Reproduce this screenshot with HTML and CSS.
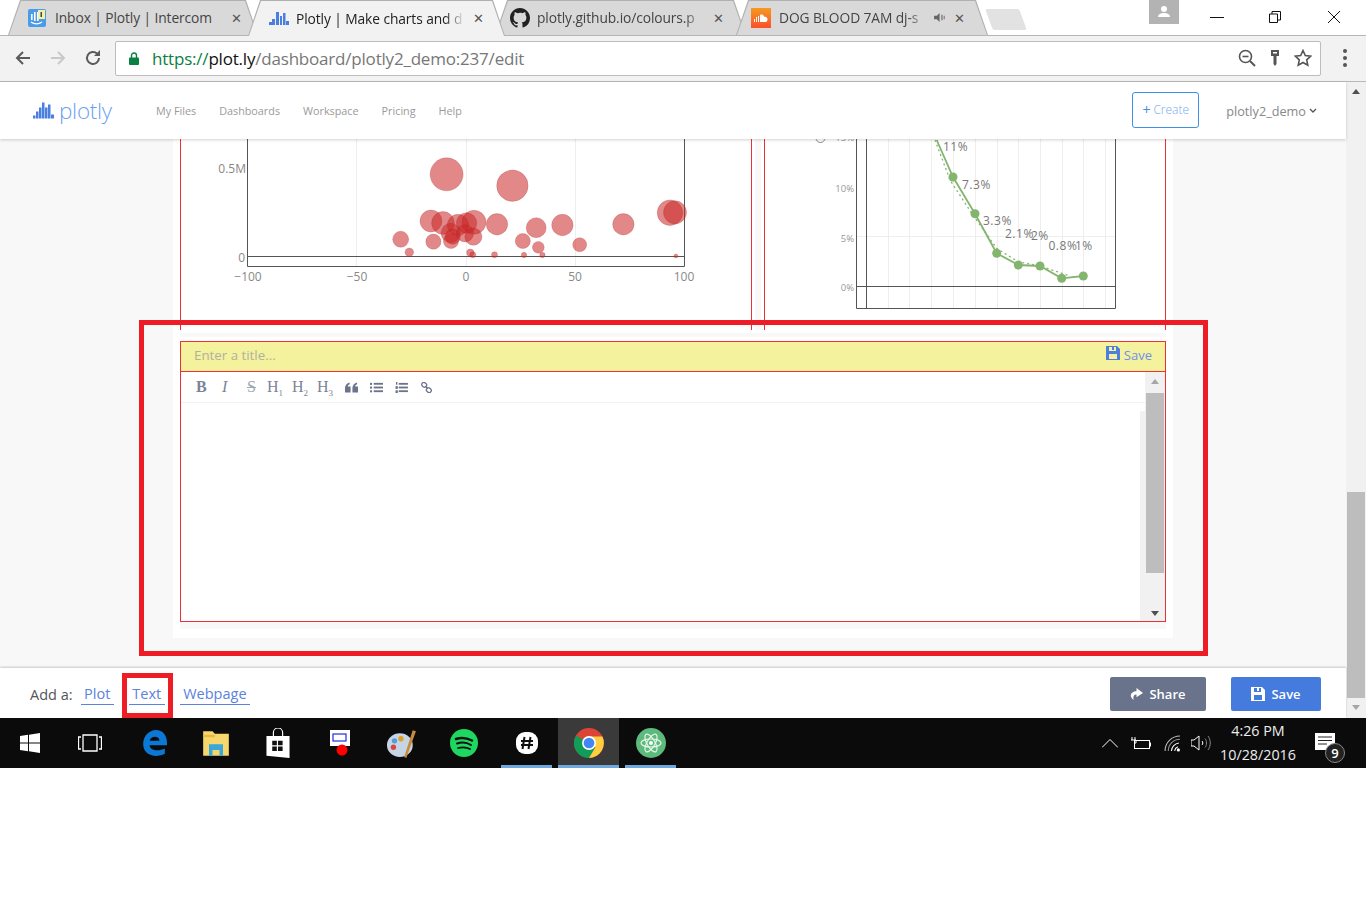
FILE: index.html
```html
<!DOCTYPE html>
<html lang="en">
<head>
<meta charset="utf-8">
<title>Plotly dashboard editor</title>
<link rel="stylesheet" href="styles.css">
</head>
<body>
<div class="window">
  <header class="tabstrip">
    <div class="tab tab-a"><svg class="fav" viewBox="0 0 18 18"><rect width="18" height="18" rx="2" fill="#4a9ce8"/><rect x="3" y="5" width="1.6" height="6" fill="#fff"/><rect x="6" y="3" width="1.6" height="9" fill="#fff"/><rect x="9" y="3" width="1.6" height="9" fill="#fff"/><path d="M3 13c3 2.500 8 2.500 11 0" stroke="#fff" fill="none" stroke-width="1.300"/><rect x="10" y="1" width="7" height="9" fill="#f5f0a8"/><rect x="12.500" y="3" width="1.500" height="5" fill="#444"/></svg><span class="tab-title">Inbox | Plotly | Intercom</span><span class="tab-x">✕</span></div>
    <div class="tab tab-b"><svg class="fav fav-wide" viewBox="0 0 20 18"><g fill="#4a7fe0"><rect x="0" y="13" width="3" height="3"/><rect x="3" y="10" width="3" height="6"/><rect x="7" y="3" width="3" height="13"/><rect x="11" y="7" width="2" height="9"/><rect x="14" y="4" width="2.500" height="12"/><rect x="17" y="12" width="3" height="4"/></g></svg><span class="tab-title tab-fade">Plotly | Make charts and d</span><span class="tab-x">✕</span></div>
    <div class="tab tab-c"><svg class="fav fav-wide" viewBox="0 0 16 16"><path fill="#222" d="M8 0C3.580 0 0 3.580 0 8c0 3.540 2.290 6.530 5.470 7.590.4.070.55-.17.55-.38v-1.340c-2.230.48-2.690-1.070-2.690-1.070-.36-.92-.89-1.170-.89-1.170-.73-.5.050-.49.050-.49.800.060 1.220.820 1.220.820.710 1.220 1.870.870 2.330.660.070-.520.280-.870.510-1.070-1.780-.200-3.640-.890-3.640-3.950 0-.870.310-1.590.820-2.150-.080-.200-.360-1.020.080-2.120 0 0 .670-.210 2.200.820A7.700 7.700 0 0 1 8 3.870c.680 0 1.360.090 2 .270 1.530-1.040 2.200-.820 2.200-.820.440 1.100.160 1.920.080 2.120.510.560.820 1.270.820 2.150 0 3.070-1.870 3.750-3.650 3.950.290.250.540.730.540 1.480v2.190c0 .210.150.460.550.380A8 8 0 0 0 16 8c0-4.420-3.580-8-8-8z"/></svg><span class="tab-title tab-fade">plotly.github.io/colours.p</span><span class="tab-x">✕</span></div>
    <div class="tab tab-d"><svg class="fav fav-wide" viewBox="0 0 20 20"><defs><linearGradient id="sc" x1="0" y1="0" x2="0" y2="1"><stop offset="0" stop-color="#f59a1f"/><stop offset="1" stop-color="#fb4f2c"/></linearGradient></defs><rect width="20" height="20" fill="url(#sc)"/><path fill="#fff" d="M3 14v-3h1v3zm2 0V9h1v5zm2 0V8h1v6zm2 0V7c2-1 4 0 4.500 2 1.500-.5 3 .5 3 2.500S15 14 14 14z"/></svg><span class="tab-title tab-fade">DOG BLOOD 7AM dj-s</span><svg class="tab-sound" viewBox="0 0 14 12"><path fill="#666" d="M0 4h3l3-3v10L3 8H0zM8 3h1.200v6H8zM10.500 4h1v4h-1z"/></svg><span class="tab-x">✕</span></div>
    <div class="newtab"></div>
    <div class="winbtns">
      <div class="profile"><svg viewBox="0 0 14 14" width="14" height="14"><circle cx="7" cy="4" r="3" fill="#fff"/><path d="M1 12c0-3 3-4 6-4s6 1 6 4z" fill="#fff"/></svg></div>
      <svg class="winicon win-min" viewBox="0 0 14 12"><path d="M0 6.500h14" stroke="#111"/></svg>
      <svg class="winicon win-max" viewBox="0 0 12 12"><path d="M.5 3h8v8.500h-8zM3 3V.5h8.500V9H9" stroke="#111" fill="none"/></svg>
      <svg class="winicon win-close" viewBox="0 0 12 12"><path d="M0 0l12 12M12 0L0 12" stroke="#111"/></svg>
    </div>
  </header>
  <div class="toolbar">
    <svg class="navicon" viewBox="0 0 18 18"><path d="M16 9H3M9 3L3 9l6 6" stroke="#5a5a5a" stroke-width="2" fill="none"/></svg>
    <svg class="navicon" viewBox="0 0 18 18"><path d="M2 9h13M9 3l6 6-6 6" stroke="#c9c9c9" stroke-width="2" fill="none"/></svg>
    <svg class="navicon" viewBox="0 0 18 18"><path d="M15 9a6 6 0 1 1-1.800-4.300" stroke="#5a5a5a" stroke-width="2" fill="none"/><path d="M16 1v6h-6z" fill="#5a5a5a"/></svg>
    <div class="omnibox">
      <svg class="lock" viewBox="0 0 10 13"><path d="M2.500 6V3.500a2.500 2.500 0 0 1 5 0V6" stroke="#0b8043" stroke-width="1.400" fill="none"/><rect y="5.500" width="10" height="7.500" rx="1" fill="#0b8043"/></svg>
      <div class="url"><span class="url-https">https://</span><span class="url-host">plot.ly</span><span class="url-path">/dashboard/plotly2_demo:237/edit</span></div>
      <svg class="omni-icon" viewBox="0 0 18 18"><circle cx="7.500" cy="7.500" r="6" stroke="#555" stroke-width="1.600" fill="none"/><path d="M12 12l5 5" stroke="#555" stroke-width="2"/><path d="M4.500 7.500h6" stroke="#555" stroke-width="1.600"/></svg>
      <svg class="omni-icon" viewBox="0 0 18 18"><path d="M5 1h8v6h-2.500v8L9 17l-1.500-2V7H5z" fill="#555"/><rect x="7" y="3" width="4" height="1.500" fill="#fff"/></svg>
      <svg class="omni-icon" viewBox="0 0 18 18"><path d="M9 1.500l2.300 5 5.400.6-4 3.700 1.100 5.400L9 13.500l-4.800 2.700 1.100-5.400-4-3.700 5.400-.6z" stroke="#555" stroke-width="1.600" fill="none"/></svg>
    </div>
    <div class="kebab"><i></i><i></i><i></i></div>
  </div>

  <div class="viewport">
    <div class="page">
      <nav class="sitenav">
        <div class="logo"><svg class="logo-mark" viewBox="0 0 22 18"><g fill="#4a7fe0"><rect x="0" y="14" width="2.500" height="3"/><rect x="3" y="10" width="2.500" height="7"/><rect x="6" y="6" width="2.500" height="11"/><rect x="9" y="1" width="2.500" height="16"/><rect x="12" y="6" width="2.500" height="11"/><rect x="15" y="3" width="2.500" height="14"/><rect x="18" y="13" width="3" height="4"/></g></svg><span class="logo-text">plotly</span></div>
        <a class="navlink">My Files</a>
        <a class="navlink">Dashboards</a>
        <a class="navlink">Workspace</a>
        <a class="navlink">Pricing</a>
        <a class="navlink">Help</a>
        <span class="nav-spacer"></span>
        <a class="create"><b>+</b> Create</a>
        <span class="user">plotly2_demo<svg viewBox="0 0 8 6" width="8" height="6"><path d="M1 1l3 3 3-3" stroke="#555" stroke-width="1.300" fill="none"/></svg></span>
      </nav>
      <main class="canvas">
        <div class="sheet">
          <div class="chart-row">
            <section class="panel panel-left">
              <svg class="chart" viewBox="1 0 570 191" width="570" height="191">
                <g stroke="#eee"><line x1="176.500" y1="0" x2="176.500" y2="127"/><line x1="286.500" y1="0" x2="286.500" y2="127"/><line x1="395.500" y1="0" x2="395.500" y2="127"/></g>
                <path d="M67.500 0v127.500h437V0" fill="none" stroke="#555"/>
                <line x1="67" y1="117.500" x2="504" y2="117.500" stroke="#555"/>
                <g fill="#cb2727" fill-opacity="0.55" stroke="#a01f1f" stroke-opacity="0.2">
                  <circle cx="266.600" cy="35.300" r="16.500"/><circle cx="332.400" cy="46.700" r="15.700"/>
                  <circle cx="251" cy="82" r="11"/><circle cx="263" cy="84" r="11.400"/><circle cx="278" cy="86" r="10.700"/><circle cx="286.600" cy="84" r="10.300"/><circle cx="294" cy="83.300" r="12"/><circle cx="317" cy="85.300" r="10.700"/>
                  <circle cx="270.700" cy="94" r="9.700"/><circle cx="272.800" cy="97.700" r="7.600"/><circle cx="285" cy="94.300" r="8.600"/><circle cx="293.400" cy="97.700" r="8.600"/><circle cx="271" cy="102" r="7.600"/>
                  <circle cx="356.200" cy="88.700" r="10"/><circle cx="382.400" cy="86" r="10.700"/><circle cx="443.400" cy="85.300" r="10.700"/><circle cx="490" cy="73.700" r="12.800"/><circle cx="495" cy="73.300" r="11.500"/>
                  <circle cx="220.700" cy="100.300" r="8"/><circle cx="253.400" cy="102.700" r="7.600"/><circle cx="342.800" cy="102" r="7.600"/><circle cx="358.300" cy="108.300" r="5.900"/><circle cx="399.700" cy="105.700" r="7"/>
                  <circle cx="229.300" cy="113.300" r="4.300"/><circle cx="290.300" cy="113.700" r="3.700"/><circle cx="292.800" cy="115.700" r="3"/><circle cx="314.500" cy="115.700" r="3"/><circle cx="344" cy="116" r="2.700"/><circle cx="362.400" cy="116" r="2.700"/><circle cx="495.900" cy="117" r="2"/>
                </g>
                <g class="tick" text-anchor="end"><text x="66" y="34">0.5M</text><text x="65" y="123">0</text></g>
                <g class="tick" text-anchor="middle"><text x="68" y="142">−100</text><text x="177" y="142">−50</text><text x="286" y="142">0</text><text x="395" y="142">50</text><text x="504" y="142">100</text></g>
              </svg>
            </section>
            <div class="gutter"></div>
            <section class="panel panel-right">
              <svg class="chart" viewBox="0 0 400 191" width="400" height="191">
                <g stroke="#eee"><line x1="123.500" y1="0" x2="123.500" y2="169"/><line x1="144.500" y1="0" x2="144.500" y2="169"/><line x1="166.500" y1="0" x2="166.500" y2="169"/><line x1="188.500" y1="0" x2="188.500" y2="169"/><line x1="210.500" y1="0" x2="210.500" y2="169"/><line x1="232.500" y1="0" x2="232.500" y2="169"/><line x1="253.500" y1="0" x2="253.500" y2="169"/><line x1="275.500" y1="0" x2="275.500" y2="169"/><line x1="297.500" y1="0" x2="297.500" y2="169"/><line x1="318.500" y1="0" x2="318.500" y2="169"/><line x1="340.500" y1="0" x2="340.500" y2="169"/><line x1="92" y1="97.500" x2="351" y2="97.500"/></g>
                <path d="M91.500 0v169.500h259V0" fill="none" stroke="#555"/>
                <line x1="91" y1="147.500" x2="351" y2="147.500" stroke="#555"/>
                <line x1="101.500" y1="0" x2="101.500" y2="169" stroke="#555"/>
                <path d="M170 1L185 41 206.700 74.300 231.700 109.300 253 122.700 275 127 305 137" fill="none" stroke="#84b56f" stroke-width="1.300" stroke-dasharray="2 3"/>
                <path d="M171.700 1L188 38 210 74.700 231.700 114.300 253.300 126 275 127 296.700 139.300 318.300 137" fill="none" stroke="#84b56f" stroke-width="1.800"/>
                <g fill="#84b56f"><circle cx="188" cy="38" r="4.500"/><circle cx="210" cy="74.700" r="4.500"/><circle cx="231.700" cy="114.300" r="4.500"/><circle cx="253.300" cy="126" r="4.500"/><circle cx="275" cy="127" r="4.500"/><circle cx="296.700" cy="139.300" r="4.500"/><circle cx="318.300" cy="137" r="4.500"/></g>
                <g class="pct"><text x="178" y="12">11%</text><text x="197" y="50">7.3%</text><text x="218" y="86">3.3%</text><text x="240" y="99">2.1%</text><text x="266" y="101">2%</text><text x="283.500" y="111">0.8%</text><text x="310" y="111">1%</text></g>
                <g class="tick-sm" text-anchor="end"><text x="89" y="2">15%</text><text x="89" y="53">10%</text><text x="89" y="103">5%</text><text x="89" y="152">0%</text></g>
                <circle cx="55.500" cy="-1" r="4.500" fill="none" stroke="#888"/>
              </svg>
            </section>
          </div>
          <div class="sheet-strip sheet-strip-top"></div>
          <section class="textcard">
            <div class="textcard-title"><span class="placeholder">Enter a title...</span><a class="textcard-save"><svg viewBox="0 0 14 14" width="14" height="14"><path fill="#4d7ee0" d="M0 0h11l3 3v11H0zM3 1v4h7V1H8v3H6V1zM3 8v5h8V8z"/></svg>Save</a></div>
            <div class="editor">
              <div class="editor-main">
                <div class="editor-tools">
                  <b class="tb tb-b">B</b><i class="tb tb-i">I</i><s class="tb tb-s">S</s>
                  <span class="tb tb-h">H<sub>1</sub></span><span class="tb tb-h">H<sub>2</sub></span><span class="tb tb-h">H<sub>3</sub></span>
                  <svg class="tb-ico tb-quote" viewBox="0 0 14 11"><path fill="#6b7489" d="M0 6c0-3 2-5 5-6v2C3.500 2.500 3 3.500 3 4.500h3V11H0zM8 6c0-3 2-5 5-6v2c-1.500.5-2 1.500-2 2.500h3V11H8z"/></svg>
                  <svg class="tb-ico" viewBox="0 0 14 11"><g fill="#6b7489"><rect y="0.500" width="2.200" height="2.200"/><rect y="4.500" width="2.200" height="2.200"/><rect y="8.500" width="2.200" height="2.200"/><rect x="4" y="0.500" width="10" height="2"/><rect x="4" y="4.500" width="10" height="2"/><rect x="4" y="8.500" width="10" height="2"/></g></svg>
                  <svg class="tb-ico" viewBox="0 0 14 12"><g fill="#6b7489"><rect x="4" y="1" width="10" height="2"/><rect x="4" y="5" width="10" height="2"/><rect x="4" y="9" width="10" height="2"/><rect x="1" y="0" width="1.500" height="3"/><rect x="0.500" y="4.500" width="2.500" height="3"/><rect x="0.500" y="9" width="2.500" height="3"/></g></svg>
                  <svg class="tb-ico" viewBox="0 0 13 13"><g fill="none" stroke="#6b7489" stroke-width="1.500"><rect x="0.800" y="0.800" width="6" height="5" rx="2.500" transform="rotate(40 3.800 3.300)"/><rect x="6.200" y="7.200" width="6" height="5" rx="2.500" transform="rotate(40 9.200 9.700)"/><path d="M5 5l3 3"/></g></svg>
                </div>
                <div class="editor-body"><div class="editor-inner-scroll"></div></div>
              </div>
              <div class="vscroll vscroll-inner">
                <span class="arrow-up"></span>
                <span class="vtrack"><span class="vthumb"></span></span>
                <span class="arrow-down dark"></span>
              </div>
            </div>
          </section>
          <div class="sheet-strip sheet-strip-bottom"></div>
        </div>
      </main>
      <footer class="addbar">
        <span class="add-label">Add a:</span>
        <a class="addlink">Plot</a>
        <a class="addlink">Text<span class="callout-small"></span></a>
        <a class="addlink">Webpage</a>
        <span class="nav-spacer"></span>
        <a class="btn btn-share"><svg viewBox="0 0 14 14" width="13" height="13"><path fill="#fff" d="M7 0l7 5.500L7 10V7C4 7 3 9 4 13 1 11 0 8 1.500 6 3 4 5 3.500 7 3.500z"/></svg>Share</a>
        <a class="btn btn-save"><svg viewBox="0 0 14 14" width="14" height="14"><path fill="#fff" d="M0 0h11l3 3v11H0zM3 1v4h7V1H8v3H6V1zM3 8v5h8V8z"/></svg>Save</a>
      </footer>
      <div class="callout-big"></div>
    </div>
    <div class="vscroll vscroll-page">
      <span class="arrow-up dark"></span>
      <span class="vtrack vtrack-page"><span class="vthumb"></span></span>
      <span class="arrow-down"></span>
    </div>
  </div>

  <footer class="taskbar">
    <div class="task-cell task-cell-narrow"><svg class="ico-20" viewBox="0 0 20 20"><path fill="#fff" d="M0 3l8-1.200V9.500H0zM9 1.700L20 0v9.500H9zM0 10.500h8v7.700L0 17zM9 10.500h11V20L9 18.300z"/></svg></div>
    <div class="task-cell task-cell-narrow task-cell-gap"><svg class="ico-24" viewBox="0 0 24 18"><path d="M5 1h14v16H5zM3 3H0.500v12H3M21 3h2.500v12H21" stroke="#fff" stroke-width="1.300" fill="none"/></svg></div>
    <div class="task-cell"><svg class="ico-26" viewBox="0 0 24 24"><path fill="#0a78d4" d="M2 13C2 5 8 0 14 0c6 0 10 5 10 12v2H8c0 5 8 6 14 3v5c-8 4-20 2-20-9zm6-3h9c0-5-8-5-9 0z"/></svg></div>
    <div class="task-cell"><svg class="ico-28" viewBox="0 0 24 24"><path fill="#f5d76e" d="M1 2h8l2 2h12v19H1z"/><path fill="#e8bb3f" d="M1 5h10v2H1z"/><path fill="#3aa7dc" d="M6 13h12v10h-3v-5H9v5H6z"/></svg></div>
    <div class="task-cell"><svg class="ico-30" viewBox="0 0 24 26"><path d="M8 8V4a4 4 0 0 1 8 0v4" stroke="#fff" fill="none"/><path fill="#fff" d="M2 7h20v19L2 24z"/><path fill="#111" d="M7 11h4v4H7zM12 11h4v4h-4zM7 16h4v4H7zM12 16h4v4h-4z"/></svg></div>
    <div class="task-cell"><svg class="ico-26" viewBox="0 0 24 26"><rect x="2" y="0" width="20" height="16" fill="#fff"/><rect x="5" y="4" width="13" height="7" fill="#fff" stroke="#2030e0" stroke-width="1.200"/><circle cx="14" cy="20" r="5.500" fill="#f00"/></svg></div>
    <div class="task-cell"><svg class="ico-30" viewBox="0 0 28 28"><ellipse cx="12" cy="16" rx="12" ry="11" fill="#c5d5e5"/><circle cx="7" cy="12" r="2.500" fill="#4ca0dc"/><circle cx="13" cy="10" r="2.500" fill="#e0a020"/><circle cx="6" cy="18" r="2.500" fill="#d9483a"/><path d="M24 2l3 1-9 25-2-1z" fill="#c98a3a"/></svg></div>
    <div class="task-cell"><svg class="ico-28" viewBox="0 0 28 28"><circle cx="14" cy="14" r="14" fill="#1ed760"/><g stroke="#111" fill="none" stroke-linecap="round"><path d="M6 10c6-2 11-1 16 1.500" stroke-width="2.500"/><path d="M7 14.500c5-1.500 10-1 14 1.500" stroke-width="2"/><path d="M8 19c4-1 9-.7 12 1" stroke-width="1.800"/></g></svg></div>
    <div class="task-slot"><svg class="ico-24" viewBox="0 0 24 24"><rect x="1" y="1" width="22" height="22" rx="9" fill="#fff"/><path d="M9.500 6l-2 12M15.500 6l-2 12M6 10h12M6 14h12" stroke="#111" stroke-width="2"/></svg></div>
    <div class="task-slot active"><svg class="ico-30" viewBox="0 0 28 28"><circle cx="14" cy="14" r="14" fill="#db4437"/><path d="M14 14L1.900 21A14 14 0 0 1 2 7z" fill="#0f9d58"/><path d="M14 28A14 14 0 0 1 1.900 21L9 14h5l6 6z" fill="#0f9d58"/><path d="M14 8h12.500A14 14 0 0 1 14 28l6-10z" fill="#ffcd40"/><circle cx="14" cy="14" r="6.500" fill="#fff"/><circle cx="14" cy="14" r="5" fill="#4285f4"/></svg></div>
    <div class="task-slot"><svg class="ico-30" viewBox="0 0 30 30"><circle cx="15" cy="15" r="15" fill="#5dba7d"/><g fill="none" stroke="#e8f5ea" stroke-width="1.200"><ellipse cx="15" cy="15" rx="10" ry="4"/><ellipse cx="15" cy="15" rx="10" ry="4" transform="rotate(60 15 15)"/><ellipse cx="15" cy="15" rx="10" ry="4" transform="rotate(120 15 15)"/></g><circle cx="15" cy="15" r="2" fill="#fff"/></svg></div>
    <span class="nav-spacer"></span>
    <div class="tray">
      <svg viewBox="0 0 16 9" width="16" height="9"><path d="M0 8.500l8-8 8 8" stroke="#fff" fill="none"/></svg>
      <svg viewBox="0 0 20 13" width="20" height="13"><rect x="3.500" y="3.500" width="15" height="8" fill="none" stroke="#fff"/><rect x="18.500" y="5.500" width="1.500" height="4" fill="#fff"/><path d="M1 0v3M4 0v3M0 3h5v3H3.500v6" stroke="#fff" fill="none"/></svg>
      <svg viewBox="0 0 16 16" width="17" height="17"><g fill="none" stroke="#bbb"><path d="M1 15A14 14 0 0 1 15 1"/><path d="M4 15A11 11 0 0 1 15 4" stroke="#999"/><path d="M7 15a8 8 0 0 1 7-7.500" stroke="#fff"/><path d="M10 15a5 5 0 0 1 3-4" stroke="#fff"/></g><circle cx="13.500" cy="14" r="1.500" fill="#fff"/></svg>
      <svg class="tray-vol" viewBox="0 0 20 16" width="20" height="16"><path d="M0 5h3l5-4v14l-5-4H0z" fill="none" stroke="#fff"/><path d="M11 6c1 1 1 3 0 4" stroke="#fff" fill="none"/><path d="M14 3.500c2 2 2 7 0 9M17 1c3 4 3 10 0 14" stroke="#888" fill="none"/></svg>
    </div>
    <div class="clock"><span>4:26 PM</span><span>10/28/2016</span></div>
    <div class="action-center"><svg viewBox="0 0 20 17" width="20" height="17"><path fill="#fff" d="M0 0h20v17H0z"/><path d="M3 4h14M3 7.500h14M3 11h9" stroke="#222"/></svg><span class="action-badge">9</span></div>
  </footer>
</div>
</body>
</html>
```
FILE: styles.css
```css
* { box-sizing: border-box; }
html, body { margin: 0; padding: 0; background: #fff; overflow: hidden; }
body { font-family: "Open Sans", "Liberation Sans", sans-serif; color: #555; height: 906px; }
a { cursor: pointer; }
.window { width: 1366px; height: 768px; display: flex; flex-direction: column; }

/* tabs */
.tabstrip { height: 36px; display: flex; align-items: flex-end; padding-left: 8px; background: #fff; border-bottom: 1px solid #b5b5b5; position: relative; flex: none; }
.tab { margin-right: -10px; height: 35px; background: #b0b0b0; clip-path: polygon(0 100%, 12px 0, calc(100% - 12px) 0, 100% 100%); display: flex; align-items: center; font-size: 13.800px; color: #444; white-space: nowrap; flex: none; position: relative; isolation: isolate; }
.tab::before { content: ""; position: absolute; inset: 1px 1px 0 1px; background: #d9d9d9; clip-path: polygon(0 100%, 12px 0, calc(100% - 12px) 0, 100% 100%); z-index: -1; }
.tab-a { width: 250px; padding: 0 15px 0 20px; }
.tab-b { width: 257px; padding: 0 20px 0 21px; color: #222; z-index: 1; height: 36px; margin-bottom: -1px; }
.tab-b::before { background: #f2f2f2; }
.tab-c { width: 251px; padding: 0 21px 0 15px; }
.tab-d { width: 252px; padding: 0 22px 0 15px; margin-right: 0; }
.fav { width: 18px; height: 18px; flex: none; margin-right: 9px; }
.fav-wide { width: 20px; height: 20px; margin-right: 7px; }
.tab-d .fav-wide { margin-right: 8px; }
.tab-title { flex: 1; overflow: hidden; letter-spacing: -0.100px; min-width: 0; }
.tab-fade { -webkit-mask-image: linear-gradient(to right, #000 calc(100% - 26px), transparent calc(100% - 6px)); mask-image: linear-gradient(to right, #000 calc(100% - 26px), transparent calc(100% - 6px)); }
.tab-x { font-size: 13px; color: #555; width: 14px; flex: none; text-align: center; }
.tab-sound { width: 13px; height: 11px; flex: none; margin: 0 5px 0 0; }
.newtab { width: 34px; height: 21px; margin: 0 0 5px 1px; background: #e2e2e2; transform: skewX(20deg); border-radius: 2px; flex: none; }
.winbtns { margin-left: auto; align-self: flex-start; display: flex; align-items: flex-start; }
.profile { width: 30px; height: 24px; background: #b3b3b3; display: flex; align-items: center; justify-content: center; margin-right: 31px; }
.winicon { height: 12px; margin-top: 11px; flex: none; }
.win-min { width: 14px; }
.win-max { width: 12px; margin-left: 45px; }
.win-close { width: 12px; margin-left: 47px; margin-right: 26px; }

/* toolbar */
.toolbar { height: 46px; flex: none; background: #f2f2f2; border-bottom: 1px solid #b8b8b8; display: flex; align-items: center; padding: 0 9px 1px 14px; }
.navicon { width: 18px; height: 18px; margin-right: 17px; flex: none; }
.navicon:nth-child(3) { margin-right: 13px; }
.omnibox { flex: 1; height: 35px; background: #fff; border: 1px solid #bdbdbd; border-radius: 2px; display: flex; align-items: center; padding: 0 8px 0 13px; }
.lock { width: 10px; height: 13px; margin-right: 13px; flex: none; }
.url { flex: 1; font-size: 17px; letter-spacing: -0.200px; white-space: nowrap; color: #777; }
.url-https { color: #0b8043; }
.url-host { color: #111; }
.omni-icon { width: 18px; height: 18px; margin-left: 10px; flex: none; }
.kebab { width: 24px; margin-left: 12px; display: flex; flex-direction: column; align-items: center; gap: 3px; flex: none; }
.kebab i { width: 4px; height: 4px; border-radius: 50%; background: #555; }

/* viewport */
.viewport { flex: 1; display: flex; min-height: 0; }
.page { width: 1346px; display: flex; flex-direction: column; position: relative; min-width: 0; }
.sitenav { height: 57px; flex: none; background: #fff; display: flex; align-items: center; padding: 0 29px 0 33px; box-shadow: 0 1px 3px rgba(0,0,0,.18); position: relative; z-index: 2; color: #9a9a9a; }
.logo { display: flex; align-items: center; width: 123px; flex: none; margin-top: 1px; }
.logo-mark { width: 22px; height: 19px; margin-right: 4px; margin-top: -2px; }
.logo-text { font-size: 22.500px; font-weight: 300; color: #6c9ff0; line-height: 1; letter-spacing: -0.300px; }
.navlink { margin-right: 23px; color: #9a9a9a; white-space: nowrap; font-size: 10.800px; }
.nav-spacer { flex: 1; }
.create { width: 67px; height: 36px; border: 1px solid #3d8fe8; border-radius: 3px; color: #77a8ee; font-size: 12px; font-weight: 300; display: flex; align-items: center; justify-content: center; gap: 3px; margin-top: -2px; flex: none; }
.create b { color: #3d8fe8; font-size: 14px; }
.user { margin-left: 27px; font-size: 12.700px; color: #888; display: flex; align-items: center; gap: 3px; white-space: nowrap; }

/* canvas */
.canvas { height: 529px; flex: none; background: #f8f8f8; overflow: hidden; display: flex; justify-content: center; }
.sheet { width: 1000px; height: 499px; background: #fff; padding: 0 7px; display: flex; flex-direction: column; flex: none; }
.chart-row { height: 191px; flex: none; display: flex; justify-content: space-between; }
.gutter { width: 6px; background: #f8f8f8; flex: none; }
.panel { border: 1px solid #ee2f37; border-width: 0 1px; overflow: hidden; height: 191px; flex: none; }
.panel-left { width: 572px; }
.panel-right { width: 402px; }
.chart { display: block; overflow: hidden; }
.tick text { font-size: 12px; fill: #888; }
.tick-sm text { font-size: 9.500px; fill: #999; }
.pct text { font-size: 12px; fill: #777; letter-spacing: .500px; }
.sheet-strip { background: #f8f8f8; flex: none; }
.sheet-strip-top { height: 4px; margin: 3px 0 4px; }
.sheet-strip-bottom { height: 7px; }
.textcard { height: 281px; flex: none; border: 1px solid #ee2f37; display: flex; flex-direction: column; }
.textcard-title { height: 30px; flex: none; background: #f4f29d; border-bottom: 1px solid #ee2f37; display: flex; align-items: center; justify-content: space-between; padding: 0 13px 3px; font-size: 13.300px; }
.placeholder { color: #b1b1a0; }
.textcard-save { color: #6f90e8; display: flex; align-items: center; gap: 4px; font-size: 13px; }
.textcard-save svg { margin: -4px 0 0 -1px; }
.editor { flex: 1; display: flex; min-height: 0; }
.editor-main { flex: 1; display: flex; flex-direction: column; min-width: 0; }
.editor-tools { height: 31px; flex: none; border-bottom: 1px solid #f2f2f2; display: flex; align-items: center; padding-left: 15px; color: #7c8496; font-family: "Liberation Serif", serif; font-size: 16px; }
.tb { display: inline-block; text-decoration: none; }
.tb-b { width: 25px; }
.tb-i { width: 25px; padding-left: 1px; }
.tb-s { width: 21px; text-decoration: line-through; padding-left: 1px; color: #a0a6b3; }
.tb-h { width: 25px; }
.tb-h sub { font-size: 9px; line-height: 0; }
.tb-ico { width: 13px; height: 11px; margin-right: 12px; flex: none; }
.tb-quote { margin-left: 3px; }
.editor-body { flex: 1; display: flex; justify-content: flex-end; padding: 8px 0 0; }
.editor-inner-scroll { width: 5px; background: #f1f1f1; }

/* scrollbars */
.vscroll { background: #f1f1f1; display: flex; flex-direction: column; align-items: center; flex: none; width: 20px; padding: 0 1px; }
.arrow-up, .arrow-down { width: 0; height: 0; border: 4.500px solid transparent; flex: none; }
.arrow-up { border-bottom: 5px solid #a6a6a6; border-top: 0; margin: 7px 0 9px; }
.arrow-down { border-top: 5px solid #a6a6a6; border-bottom: 0; margin: 6px 0 5px; }
.arrow-up.dark { border-bottom-color: #505050; }
.arrow-down.dark { border-top-color: #505050; }
.vtrack { flex: 1; width: 100%; display: flex; flex-direction: column; min-height: 0; }
.vthumb { display: block; width: 100%; height: 180px; background: #bdbdbd; flex: none; }
.vtrack-page { justify-content: flex-end; }
.vtrack-page .vthumb { height: 206px; }
.vscroll-page .arrow-up { margin: 7px 0 0; }
.vscroll-page .arrow-down { margin: 7px 0 8px; }

/* bottom bar */
.addbar { flex: 1; background: #fff; box-shadow: 0 -1px 2px rgba(0,0,0,.2); display: flex; align-items: center; padding: 2px 25px 0 30px; position: relative; z-index: 2; }
.add-label { color: #555; font-size: 14.500px; margin-right: 8px; }
.addlink { color: #5b82dc; border-bottom: 1px solid #5b82dc; padding: 0 3.500px; margin-right: 15px; line-height: 21px; font-size: 14.500px; position: relative; }
.callout-small { position: absolute; left: -7px; top: -10px; width: 51px; height: 45px; border: 5px solid #ee1c25; pointer-events: none; }
.btn { height: 34px; border-radius: 2px; color: #fff; font-size: 13px; font-weight: 600; display: flex; align-items: center; justify-content: center; gap: 6px; flex: none; }
.btn-share { width: 96px; background: #69738b; margin-right: 25px; }
.btn-save { width: 90px; background: #447bdc; }
.callout-big { position: absolute; left: 139px; top: 238px; width: 1069px; height: 336px; border: 5px solid #ee1c25; pointer-events: none; z-index: 1; }

/* taskbar */
.taskbar { height: 50px; flex: none; background: #0b0b0b; display: flex; align-items: center; color: #fff; position: relative; z-index: 3; }
.task-cell { width: 62px; height: 50px; flex: none; display: flex; align-items: center; justify-content: center; }
.task-cell-narrow { width: 60px; }
.task-cell-gap { margin-right: 3px; }
.ico-20 { width: 20px; height: 20px; }
.ico-24 { width: 24px; height: 24px; }
.ico-26 { width: 26px; height: 26px; }
.ico-28 { width: 28px; height: 28px; }
.ico-30 { width: 30px; height: 30px; }
.task-slot { width: 51px; height: 50px; margin-left: 6px; display: flex; align-items: center; justify-content: center; border-bottom: 3px solid #6fa8dc; padding-top: 2px; flex: none; }
.task-slot.active { background: #3a3a3a; width: 61px; }
.tray { display: flex; align-items: center; gap: 13px; margin-right: 5px; }
.tray-vol { margin-left: -3px; }
.clock { width: 84px; display: flex; flex-direction: column; align-items: center; font-size: 14.300px; line-height: 24px; color: #eee; white-space: nowrap; flex: none; }
.action-center { width: 66px; height: 50px; position: relative; padding: 15px 0 0 15px; flex: none; }
.action-badge { position: absolute; left: 25px; top: 25px; width: 20px; height: 20px; border-radius: 50%; border: 1px solid #888; background: #222; font-size: 13px; font-weight: 600; line-height: 18px; text-align: center; color: #fff; }
```
